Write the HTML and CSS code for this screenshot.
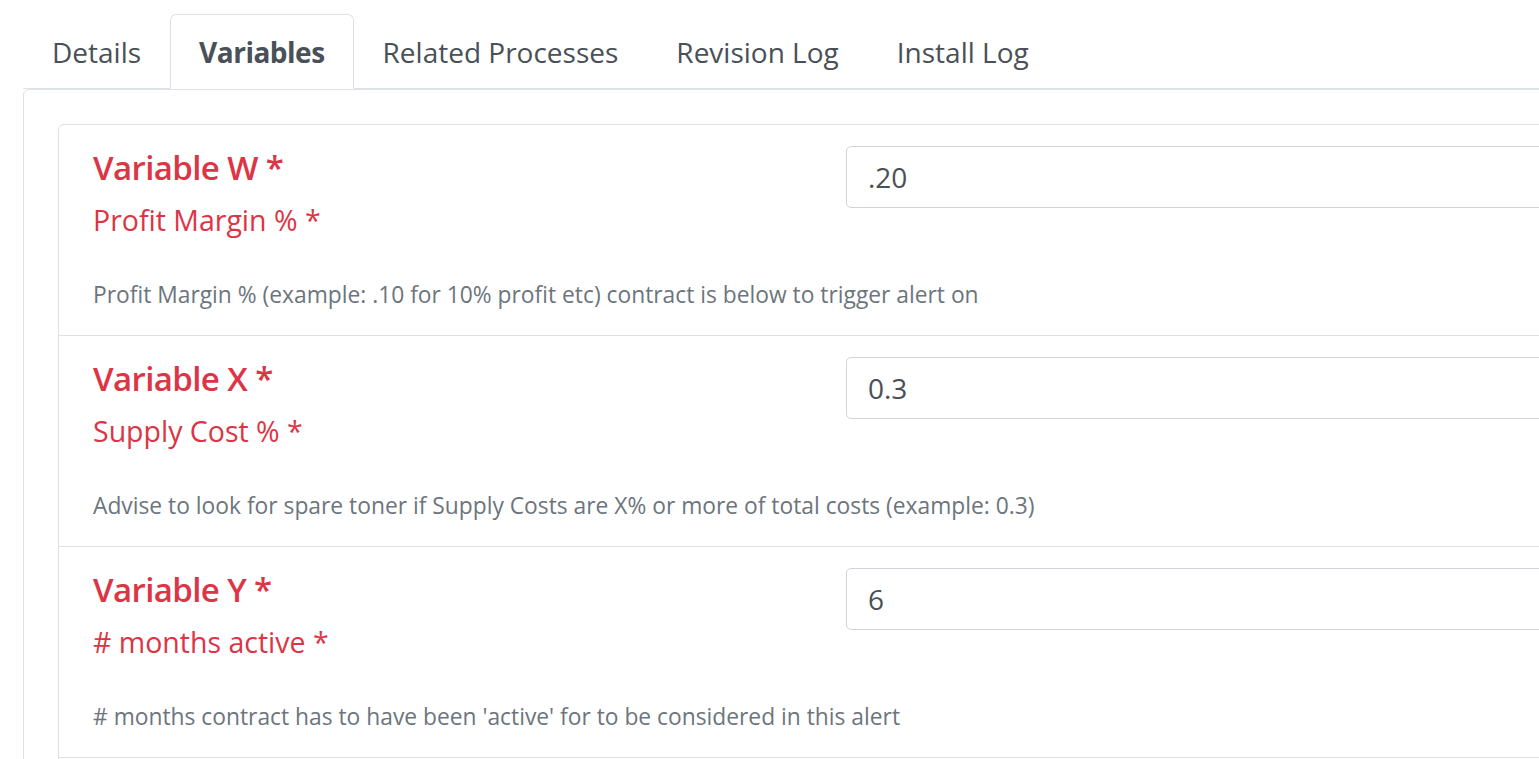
FILE: index.html
```html
<!DOCTYPE html>
<html lang="en">
<head>
  <meta charset="UTF-8" />
  <title>Alert Variables</title>
  <link rel="stylesheet" href="styles.css">
</head>
<body>

  <div class="page">
    <!-- Tabs -->
    <ul class="nav-tabs">
      <li class="tab">Details</li>
      <li class="tab active">Variables</li>
      <li class="tab">Related Processes</li>
      <li class="tab">Revision Log</li>
      <li class="tab">Install Log</li>
    </ul>

    <!-- Variables panel -->
    <div class="tab-panel">
      <div class="var-list">

        <div class="var-item">
          <div class="var-head">
            <div class="var-labels">
              <h5 class="var-title">Variable W *</h5>
              <label class="var-label">Profit Margin % *</label>
            </div>
            <input type="text" class="var-input" value=".20" />
          </div>
          <small class="var-help">Profit Margin % (example: .10 for 10% profit etc) contract is below to trigger alert on</small>
        </div>

        <div class="var-item">
          <div class="var-head">
            <div class="var-labels">
              <h5 class="var-title">Variable X *</h5>
              <label class="var-label">Supply Cost % *</label>
            </div>
            <input type="text" class="var-input" value="0.3" />
          </div>
          <small class="var-help">Advise to look for spare toner if Supply Costs are X% or more of total costs (example: 0.3)</small>
        </div>

        <div class="var-item">
          <div class="var-head">
            <div class="var-labels">
              <h5 class="var-title">Variable Y *</h5>
              <label class="var-label"># months active *</label>
            </div>
            <input type="text" class="var-input" value="6" />
          </div>
          <small class="var-help"># months contract has to have been 'active' for to be considered in this alert</small>
        </div>

      </div>
    </div>
  </div>

</body>
</html>
```

FILE: styles.css
```css
/* Reset & Base */
* {
  margin: 0;
  padding: 0;
  box-sizing: border-box;
}
html, body {
  height: 100%;
  overflow: hidden;
  background: #fff;
  font-family: 'Open Sans', 'Noto Sans', sans-serif;
  color: #495057;
}

.page {
  width: 1800px;
  padding: 14px 0 0 23px;
}

/* Tabs */
.nav-tabs {
  list-style: none;
  display: flex;
  border-bottom: 1px solid #dee2e6;
}
.tab {
  font-size: 28px;
  line-height: 44px;
  padding: 14.5px 28px;
  border: 1px solid transparent;
  border-top-left-radius: 6px;
  border-top-right-radius: 6px;
  margin-bottom: -1px;
  color: #495057;
}
.tab.active {
  font-weight: bold;
  letter-spacing: -0.5px;
  background: #fff;
  border-color: #dee2e6 #dee2e6 #fff;
}

/* Panel */
.tab-panel {
  border: 1px solid #dee2e6;
  border-radius: 6px;
  padding: 34px;
  height: 900px;
}
.var-list {
  border: 1px solid #dee2e6;
  border-radius: 6px;
  height: 800px;
}
.var-item {
  padding: 21px 34px 23px;
  border-bottom: 1px solid #dee2e6;
}
.var-head {
  display: flex;
  align-items: flex-start;
}
.var-labels {
  width: 753px;
  flex-shrink: 0;
}
.var-title {
  font-size: 33px;
  line-height: 43px;
  font-weight: 600;
  letter-spacing: -0.6px;
  color: #dc3545;
}
.var-label {
  display: block;
  margin-top: 10px;
  font-size: 28.5px;
  line-height: 43px;
  color: #dc3545;
}
.var-input {
  flex: 1;
  height: 62px;
  padding: 0 21px;
  border: 1px solid #ced4da;
  border-radius: 5px;
  font-family: inherit;
  font-size: 28px;
  color: #495057;
  background: #fff;
}
.var-help {
  display: block;
  margin-top: 36px;
  font-size: 22.8px;
  line-height: 34px;
  color: #6c757d;
}
```
